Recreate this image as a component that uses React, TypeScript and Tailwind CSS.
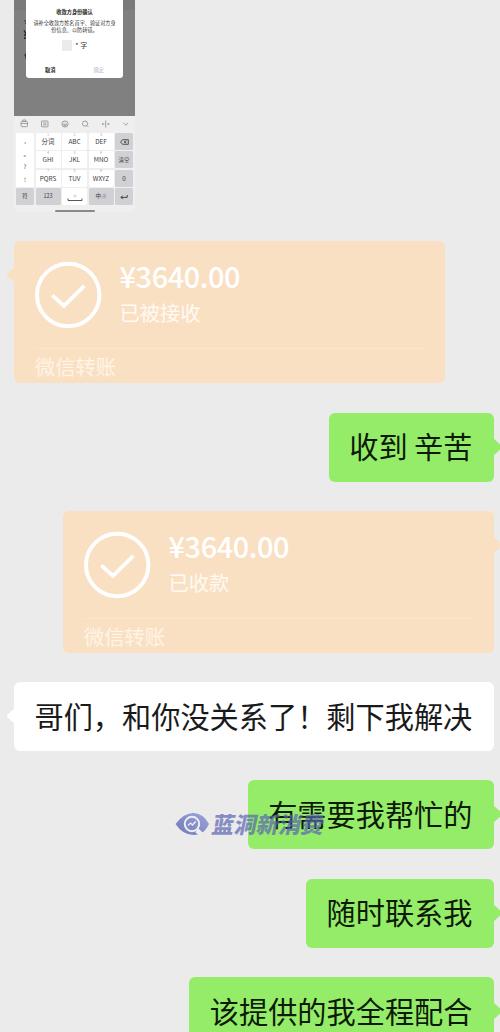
import React from "react";

type Side = "left" | "right";

function Tail({ side, fill }: { side: Side; fill: string }) {
  return (
    <svg
      className={
        side === "left"
          ? "absolute -left-[8.5px] top-[25px] h-[18px] w-[10px]"
          : "absolute -right-[8.5px] top-[25px] h-[18px] w-[10px] -scale-x-100"
      }
      viewBox="0 0 10 18"
      fill={fill}
    >
      <path d="M10 0 L1.6 7.6 Q0.2 9 1.6 10.4 L10 18Z" />
    </svg>
  );
}

function Bubble({ side, children }: { side: Side; children: React.ReactNode }) {
  const right = side === "right";
  return (
    <div className={right ? "flex justify-end" : "flex justify-start"}>
      <div
        className={
          "relative flex h-[69px] items-center whitespace-pre rounded-[6px] pl-[20.5px] pr-[21.5px] text-[29.2px] leading-none " +
          (right ? "bg-[#95ec69] text-[#0d1a08]" : "bg-white text-[#1a1a1a]")
        }
      >
        <Tail side={side} fill={right ? "#95ec69" : "#ffffff"} />
        <span className="block pb-[4px] leading-[44px]">{children}</span>
      </div>
    </div>
  );
}

function Transfer({ side, status }: { side: Side; status: string }) {
  return (
    <div className={side === "right" ? "flex justify-end" : "flex justify-start"}>
      <div className="relative flex h-[142px] w-[431px] flex-col rounded-[6px] bg-[#fae0c3] px-[21px]">
        <Tail side={side} fill="#fae0c3" />
        <div className="flex h-[108px] items-start border-b border-[#fbe5cd] pt-[20px]">
          <svg className="h-[68px] w-[67px] shrink-0" viewBox="0 0 67 68" fill="none" stroke="#fff">
            <circle cx="33.2" cy="34" r="31.2" strokeWidth="4" />
            <path d="M17.3 34.3 L29 44.8 L49.3 24.8" strokeWidth="3.8" />
          </svg>
          <div className="ml-[17.5px] flex flex-col text-white">
            <span className="-mt-[1px] text-[28.8px] font-medium leading-[32px] tracking-[-0.35px]">¥3640.00</span>
            <span className="mt-[6px] text-[20.3px] leading-[28px] text-[#fffaf3]">{status}</span>
          </div>
        </div>
        <span className="mt-[2px] text-[20.3px] leading-[30px] text-[#fff4e6]">微信转账</span>
      </div>
    </div>
  );
}

function Key({ label, hint, dark }: { label: React.ReactNode; hint?: string; dark?: boolean }) {
  return (
    <div
      className={
        "relative flex items-center justify-center rounded-[1.5px] pt-[1px] text-[6.4px] leading-none text-[#3c3c3c] " +
        (dark ? "bg-[#d0d0d5]" : "bg-white")
      }
    >
      {hint && <span className="absolute top-[0.5px] text-[3px] text-[#999]">{hint}</span>}
      {label}
    </div>
  );
}

function KeyboardToolbar() {
  return (
    <svg className="h-[16px] w-full" viewBox="0 0 121 16" fill="none" stroke="#8c8c8c" strokeWidth="0.8">
      <rect x="7" y="5.5" width="6.5" height="5.2" rx="1" />
      <path d="M8.7 5.5V4h3v1.5M7 7.5h6.5" />
      <rect x="27.5" y="5" width="6.5" height="5.8" rx="0.5" />
      <path d="M29 7h3.6M29 8.8h3.6" />
      <circle cx="51" cy="8" r="3.1" />
      <path d="M49.4 8.3h3.2q-.3 1.6-1.6 1.6t-1.6-1.6M50 6.5v.5M52 6.5v.5" />
      <circle cx="71" cy="7.6" r="2.6" />
      <path d="M73 9.6l1.4 1.4" />
      <path d="M91.7 4.5v7M88.5 8h1.8M93.2 8H95M89.3 7l-1 1 1 1M94.2 7l1 1-1 1" />
      <path d="M109.3 6.8l2.4 2.4 2.4-2.4" />
    </svg>
  );
}

function PhoneScreenshot() {
  return (
    <div className="flex h-[212px] w-[121px] flex-col overflow-hidden rounded-b-[5px] bg-[#efeff0]">
      <div className="relative flex h-[116px] shrink-0 flex-col bg-[#808080]">
        <div className="h-[10px] shrink-0 bg-[#7a7a7a]" />
        <svg className="absolute left-[9px] top-[18px] h-[42px] w-[4px]" viewBox="0 0 4 42" fill="none" stroke="#222">
          <path d="M1 3h3M2 5.500h2" strokeWidth="0.8" />
          <path d="M1 12.500l2.500 4M1 17h3M1 20h3" strokeWidth="1.3" />
          <path d="M1 37h3M2.500 35.500v5" strokeWidth="0.7" />
        </svg>
        <div className="absolute left-[12px] top-0 flex h-[78px] w-[97px] flex-col items-center rounded-b-[3px] bg-white text-[#333]">
          <span className="mt-[8px] text-[5.2px] font-bold leading-[8px] text-[#222]">收款方身份确认</span>
          <span className="mt-[4px] whitespace-nowrap text-center text-[5.15px] leading-[6.6px]">
            请补全收款方姓名首字、验证对方身
            <br />
            份信息、以防转错。
          </span>
          <div className="mt-[7px] flex h-[11px] items-center gap-[3px] text-[7px] leading-none">
            <span className="h-[11px] w-[10.5px] bg-[#ebebeb]" />
            <span>* 字</span>
          </div>
          <div className="mt-[13px] grid w-full grid-cols-2 text-center text-[5.2px] leading-[11px]">
            <span className="font-bold text-[#222]">取消</span>
            <span className="text-[#b4bac8]">确定</span>
          </div>
        </div>
      </div>
      <KeyboardToolbar />
      <div className="mt-[1px] grid h-[72px] shrink-0 grid-cols-[18px_25px_25px_25px_18px] grid-rows-4 gap-x-[1.5px] gap-y-[1.8px] px-[2px]">
        <div className="row-span-3 flex flex-col items-center justify-around rounded-[1.5px] bg-white pt-[2px] text-[6px] leading-none text-[#444]">
          <span>,</span>
          <span className="pl-[3px]">。</span>
          <span>?</span>
          <span>!</span>
        </div>
        <Key label="分词" hint="1" />
        <Key label="ABC" hint="2" />
        <Key label="DEF" hint="3" />
        <Key
          dark
          label={
            <svg className="h-[6px] w-[9px]" viewBox="0 0 9 6" fill="none" stroke="#333" strokeWidth="0.8">
              <path d="M2.5.7h5.8v4.6H2.5L.6 3zM4 1.9l2.4 2.2M6.4 1.9L4 4.1" />
            </svg>
          }
        />
        <Key label="GHI" hint="4" />
        <Key label="JKL" hint="5" />
        <Key label="MNO" hint="6" />
        <Key dark label={<span className="text-[5.5px]">清空</span>} />
        <Key label="PQRS" hint="7" />
        <Key label="TUV" hint="8" />
        <Key label="WXYZ" hint="9" />
        <Key dark label="0" />
        <Key dark label={<span className="text-[5.5px]">符</span>} />
        <Key dark label={<span className="text-[5.5px]">123</span>} />
        <Key
          label={
            <svg className="h-[10px] w-[16px]" viewBox="0 0 16 10" fill="none" stroke="#444">
              <path d="M1 6.5v2h14v-2" strokeWidth="0.9" />
              <path d="M7 3h2v2H7z" strokeWidth="0.4" stroke="#aaa" />
            </svg>
          }
        />
        <Key
          dark
          label={
            <span className="text-[5.5px]">
              中<span className="text-[4px] text-[#888]">/英</span>
            </span>
          }
        />
        <Key
          dark
          label={
            <svg className="h-[6px] w-[8px]" viewBox="0 0 8 6" fill="none" stroke="#333" strokeWidth="0.9">
              <path d="M7.2 1v2.4H1M2.8 1.6L1 3.4l1.8 1.8" />
            </svg>
          }
        />
      </div>
      <div className="mx-auto mt-[5px] h-[1.5px] w-[40px] shrink-0 rounded-full bg-[#8a8a8a]" />
    </div>
  );
}

function Watermark() {
  return (
    <div className="absolute -left-[73px] top-[32px] z-10 flex items-center whitespace-nowrap opacity-70">
      <svg className="h-[24px] w-[35px] shrink-0" viewBox="0 0 35 24">
        <defs>
          <linearGradient id="eye" x1="0" y1="1" x2="1" y2="0">
            <stop offset="0" stopColor="#3d4a9e" />
            <stop offset="1" stopColor="#7c88da" />
          </linearGradient>
        </defs>
        <path
          d="M0.5 12 Q8 1.5 18 1 Q28 1 34 12 Q31 18 27.5 20.5 L24 17 L20 20 L23 22.6 Q9 25 0.5 12Z"
          fill="url(#eye)"
        />
        <circle cx="17" cy="12" r="7.2" fill="none" stroke="#f0f1fa" strokeWidth="2" />
        <path d="M13 13.6l2.5-2.5 2 1.8 3.2-3.4" fill="none" stroke="#f0f1fa" strokeWidth="1.4" />
        <path d="M22 17l5 4.500" stroke="#f0f1fa" strokeWidth="2" />
      </svg>
      <span className="-mt-[2px] ml-[3.5px] -skew-x-12 text-[22.3px] font-black leading-[26px] text-[#5c66b4]">
        蓝洞新消费
      </span>
    </div>
  );
}

export default function App() {
  return (
    <div
      lang="zh-CN"
      className="h-[1032px] w-[500px] overflow-hidden bg-[#ebebeb] font-['Noto_Sans_CJK_SC',sans-serif]"
    >
      <div className="flex flex-col gap-[29.3px] pl-[14px] pr-[6px]">
        <PhoneScreenshot />
        <Transfer side="left" status="已被接收" />
        <Bubble side="right">收到 辛苦</Bubble>
        <Transfer side="right" status="已收款" />
        <Bubble side="left">哥们，和你没关系了！剩下我解决</Bubble>
        <Bubble side="right">
          有需要我帮忙的
          <Watermark />
        </Bubble>
        <Bubble side="right">随时联系我</Bubble>
        <Bubble side="right">该提供的我全程配合</Bubble>
      </div>
    </div>
  );
}
